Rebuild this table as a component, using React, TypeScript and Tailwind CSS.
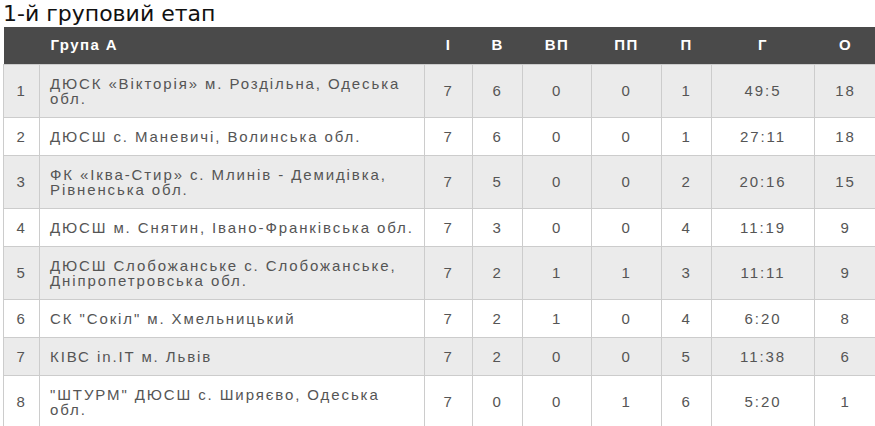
import React from "react";

const rows: [string, string, number, number, number, number, number, string, number][] = [
  ["1", "ДЮСК «Вікторія» м. Роздільна, Одеська обл.", 7, 6, 0, 0, 1, "49:5", 18],
  ["2", "ДЮСШ с. Маневичі, Волинська обл.", 7, 6, 0, 0, 1, "27:11", 18],
  ["3", "ФК «Іква-Стир» с. Млинів - Демидівка, Рівненська обл.", 7, 5, 0, 0, 2, "20:16", 15],
  ["4", "ДЮСШ м. Снятин, Івано-Франківська обл.", 7, 3, 0, 0, 4, "11:19", 9],
  ["5", "ДЮСШ Слобожанське с. Слобожанське, Дніпропетровська обл.", 7, 2, 1, 1, 3, "11:11", 9],
  ["6", "СК \"Сокіл\" м. Хмельницький", 7, 2, 1, 0, 4, "6:20", 8],
  ["7", "КІВС in.IT м. Львів", 7, 2, 0, 0, 5, "11:38", 6],
  ["8", "\"ШТУРМ\" ДЮСШ с. Ширяєво, Одеська обл.", 7, 0, 0, 1, 6, "5:20", 1],
];

const widths = [36, 385, 48, 50, 69, 70, 50, 103, 62];
const heads = ["", "Група А", "І", "В", "ВП", "ПП", "П", "Г", "О"];

export default function App() {
  return (
    <div className="w-[875px] h-[426px] overflow-hidden bg-white">
      <h2
        className="pl-[3px] text-[22px] leading-[27px] text-[#111] font-normal"
        style={{ fontFamily: '"DejaVu Sans", sans-serif' }}
      >
        1-й груповий етап
      </h2>
      <table
        className="ml-[3px] w-[873px] table-fixed border-collapse text-[15px] text-[#555] tracking-[1.9px]"
        style={{ fontFamily: '"Liberation Sans", Arial, sans-serif' }}
      >
        <colgroup>
          {widths.map((w, i) => (
            <col key={i} style={{ width: w }} />
          ))}
        </colgroup>
        <thead>
          <tr className="bg-[#4a4a4a] text-white h-[37px]">
            {heads.map((h, i) => (
              <th
                key={i}
                className={`font-bold p-0 tracking-[1.4px] ${i === 1 ? "text-left pl-[11px]" : "text-center"}`}
              >
                {h}
              </th>
            ))}
          </tr>
        </thead>
        <tbody>
          {rows.map((r, ri) => (
            <tr key={ri} className={ri % 2 === 0 ? "bg-[#ebebeb]" : "bg-white"}>
              {r.map((c, ci) => (
                <td
                  key={ci}
                  className={`border border-[#cccccc] py-[11px] leading-[15px] align-middle ${
                    ci === 1 ? "text-left pl-[10px] pr-[8px]" : "text-center"
                  }`}
                >
                  {c}
                </td>
              ))}
            </tr>
          ))}
        </tbody>
      </table>
    </div>
  );
}
